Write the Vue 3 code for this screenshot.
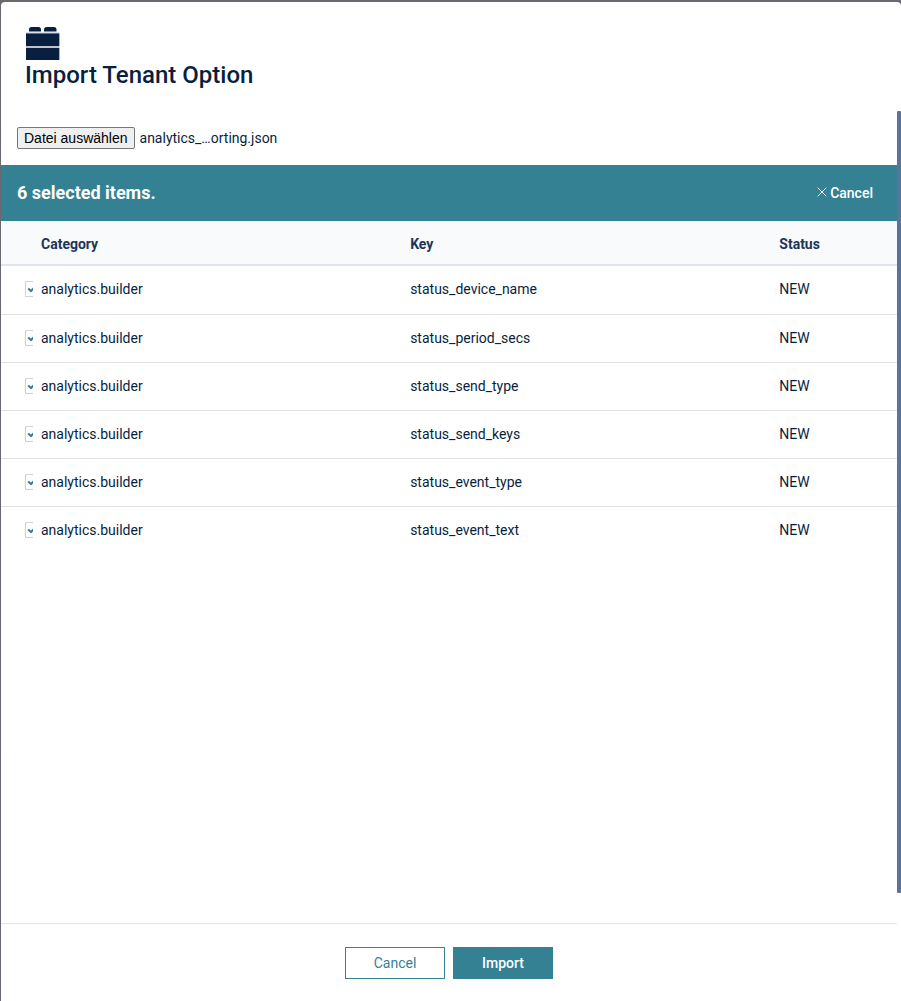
<script setup>
import { computed, ref } from 'vue'

const fileName = ref('analytics_…orting.json')
const fileInput = ref(null)

const options = ref(
  [
    'status_device_name',
    'status_period_secs',
    'status_send_type',
    'status_send_keys',
    'status_event_type',
    'status_event_text'
  ].map((key) => ({ category: 'analytics.builder', key, status: 'NEW', selected: true }))
)

const selectedCount = computed(() => options.value.filter((o) => o.selected).length)

function onFile(event) {
  const file = event.target.files[0]
  if (file) fileName.value = file.name
}

function clearSelection() {
  options.value.forEach((o) => (o.selected = false))
}
</script>

<template>
  <div class="backdrop">
    <main class="dialog" role="dialog" aria-labelledby="dialog-title">
      <header class="head">
        <svg class="brick" viewBox="0 0 35 34" aria-hidden="true">
          <path d="M4 5.500V3.500Q4 1 6.500 1H13.500Q16 1 16 3.500V5.500Z" />
          <path d="M19 5.500V3.500Q19 1 21.500 1H29Q31.500 1 31.500 3.500V5.500Z" />
          <path class="seam" d="M1 6.500H34.300V33H1Z" />
          <path d="M1 7.500H34.300V20H1ZM1 22H34.300V34H1Z" />
        </svg>
        <h1 id="dialog-title">Import Tenant Option</h1>
      </header>

      <div class="body">
        <div class="content">
          <div class="picker">
            <button type="button" class="choose" @click="fileInput.click()">Datei auswählen</button>
            <input ref="fileInput" type="file" hidden aria-label="Datei auswählen" @change="onFile" />
            <span>{{ fileName }}</span>
          </div>

          <div class="selection">
            <strong>{{ selectedCount }} selected items.</strong>
            <button type="button" class="clear" @click="clearSelection">
              <svg viewBox="0 0 10 10" aria-hidden="true"><path d="M0.700 0.700L9.300 9.300M9.300 0.700L0.700 9.300" /></svg>
              <span>Cancel</span>
            </button>
          </div>

          <table>
            <colgroup>
              <col class="col-check" />
              <col class="col-wide" />
              <col class="col-wide" />
              <col />
            </colgroup>
            <thead>
              <tr>
                <td></td>
                <th scope="col">Category</th>
                <th scope="col">Key</th>
                <th scope="col">Status</th>
              </tr>
            </thead>
            <tbody>
              <tr v-for="option in options" :key="option.key">
                <td class="check-cell">
                  <label class="check">
                    <input v-model="option.selected" type="checkbox" :aria-label="option.key" />
                    <svg v-if="option.selected" viewBox="0 0 8 16" aria-hidden="true">
                      <path d="M3.200 7.500L6 10L9 7" />
                    </svg>
                  </label>
                </td>
                <td>{{ option.category }}</td>
                <td>{{ option.key }}</td>
                <td>{{ option.status }}</td>
              </tr>
            </tbody>
          </table>
        </div>
        <div class="rail"></div>
      </div>

      <footer class="foot">
        <button type="button" class="btn">Cancel</button>
        <button type="button" class="btn primary">Import</button>
      </footer>
    </main>
  </div>
</template>

<style>
body {
  background: #696970;
}
</style>

<style scoped>
.backdrop {
  box-sizing: border-box;
  min-height: 100vh;
  padding: 2px 0 0 1px;
  display: flex;
  background: linear-gradient(#6b696f, #646877);
  font-family: Roboto, "Liberation Sans", sans-serif;
  font-size: 14px;
  line-height: 20px;
  color: #081f40;
}

button {
  font: inherit;
  cursor: pointer;
}

.dialog {
  flex: 1;
  min-width: 0;
  display: flex;
  flex-direction: column;
  background: #fff;
  border-radius: 4px 4px 0 0;
}

.head {
  padding: 24px 24px 21px;
}

.brick {
  display: block;
  width: 35px;
  height: 34px;
  fill: #081f40;
}

.brick .seam {
  fill: #bcc4d0;
}

h1 {
  margin: 0;
  font-size: 24px;
  line-height: 30px;
  font-weight: 500;
}

.body {
  flex: 1;
  display: flex;
}

.content {
  flex: 1;
  min-width: 0;
}

.rail {
  width: 4px;
  margin-bottom: 30px;
  border-radius: 1px;
  background: #57749a;
}

.picker {
  display: flex;
  align-items: center;
  gap: 5px;
  padding: 16px;
}

.choose {
  box-sizing: border-box;
  height: 22px;
  padding: 0 6px;
  border: 1px solid #767676;
  border-radius: 2px;
  background: #efefef;
  color: #000;
  font-family: "Liberation Sans", Arial, sans-serif;
  line-height: 20px;
}

.selection {
  display: flex;
  align-items: center;
  justify-content: space-between;
  height: 56px;
  padding: 0 24px 0 16px;
  background: #338193;
  color: #fff;
}

.selection strong {
  font-size: 18px;
  font-weight: 700;
}

.clear {
  display: flex;
  align-items: center;
  gap: 3px;
  padding: 0;
  border: 0;
  background: none;
  color: #fff;
  font-weight: 500;
}

.clear svg {
  width: 10px;
  height: 10px;
  margin-bottom: 2px;
  fill: none;
  stroke: #fff;
}

table {
  width: 100%;
  table-layout: fixed;
  border-collapse: separate;
  border-spacing: 0;
}

.col-check {
  width: 32px;
}

.col-wide {
  width: 41.2%;
}

th,
td {
  padding: 13px 8px 14px;
  text-align: left;
  border-top: 1px solid #e0e3ea;
}

thead th,
thead td {
  padding: 13px 8px 10px;
  border-top: 0;
  border-bottom: 2px solid #e0e3ea;
  background: #f8fafc;
  color: #1d3557;
  font-weight: 700;
}

tbody tr:first-child td {
  padding-bottom: 15px;
  border-top: 0;
}

.check-cell {
  padding-left: 24px;
  padding-right: 0;
}

.check {
  position: relative;
  display: block;
  width: 8px;
  height: 16px;
  overflow: hidden;
}

.check input {
  appearance: none;
  box-sizing: border-box;
  display: block;
  width: 16px;
  height: 16px;
  margin: 0;
  border: 1px solid #cdd4de;
  background: #fff;
}

.check svg {
  position: absolute;
  inset: 0;
  width: 8px;
  height: 16px;
  fill: none;
  stroke: #338193;
  stroke-width: 2;
  pointer-events: none;
}

.foot {
  display: flex;
  justify-content: center;
  gap: 8px;
  margin-right: 4px;
  padding: 23px 16px 22px;
  border-top: 1px solid #e0e3ea;
}

.btn {
  box-sizing: border-box;
  width: 100px;
  height: 32px;
  padding: 0;
  border: 1px solid #338193;
  background: #fff;
  color: #338193;
}

.btn.primary {
  background: #338193;
  color: #fff;
  font-weight: 500;
}
</style>
